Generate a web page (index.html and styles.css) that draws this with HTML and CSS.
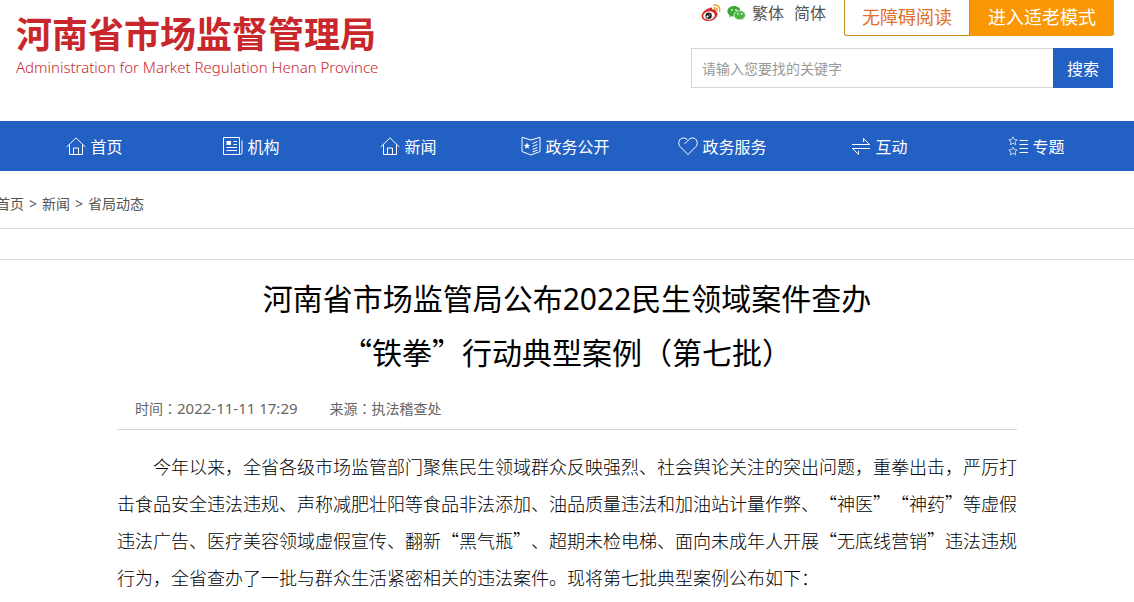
FILE: index.html
```html
<!DOCTYPE html>
<html lang="zh-CN">

<head>
    <meta charset="UTF-8">
    <meta name="viewport" content="width=device-width, initial-scale=1">
    <title>河南省市场监督管理局</title>
    <link rel="stylesheet" href="styles.css">
</head>

<body>
    <header class="header">
        <div class="logo">
            <div class="logo-cn">河南省市场监督管理局</div>
            <div class="logo-en">Administration for Market Regulation Henan Province</div>
        </div>
        <div class="tools">
            <div class="top-links">
                <a href="#" class="social" aria-label="微博">
                    <svg width="20" height="18" viewBox="0 0 20 18">
                        <path d="M8 4.2C9.6 3.2 11.4 3.4 11.2 5.6C13.6 4.6 15.4 5.3 14.8 7.6C17 8.5 17 10.8 15.7 12.7C14 15.4 10.8 17 7.6 17C3.6 17 .6 15 .6 12C.6 9.2 3.8 5.6 8 4.2Z" fill="#d52b2a" />
                        <ellipse cx="8" cy="11.6" rx="5.8" ry="4.2" fill="#fff" transform="rotate(-8 8 11.6)" />
                        <circle cx="7.6" cy="11.8" r="3.2" fill="#222" />
                        <circle cx="6.5" cy="12.6" r="1.1" fill="#fff" />
                        <circle cx="8.5" cy="11" r=".6" fill="#fff" />
                        <path d="M13 1.2C16.8.4 19.6 3.6 18.4 7.2M13.3 4C15.2 3.6 16.5 5 16 6.8" fill="none" stroke="#f0a02c" stroke-width="1.5" stroke-linecap="round" />
                    </svg>
                </a>
                <a href="#" class="social" aria-label="微信">
                    <svg width="19" height="16" viewBox="0 0 19 16">
                        <path d="M7 1C3.2 1 .4 3.3.4 6.3C.4 8 1.3 9.4 2.7 10.4L2.1 12.3L4.4 11.2C5.2 11.5 6 11.6 7 11.6C10.8 11.6 13.6 9.3 13.6 6.3S10.8 1 7 1Z" fill="#3fa535" />
                        <path d="M12.6 5.6C9.3 5.6 6.9 7.6 6.9 10.2C6.9 12.9 9.3 14.8 12.6 14.8C13.3 14.8 14 14.7 14.7 14.4L16.6 15.5L16.1 13.7C17.5 12.9 18.4 11.6 18.4 10.2C18.4 7.6 15.9 5.6 12.6 5.6Z" fill="#4eb244" stroke="#fff" stroke-width=".7" />
                        <circle cx="4.8" cy="4.8" r=".9" fill="#fff" />
                        <circle cx="9" cy="4.8" r=".9" fill="#fff" />
                        <circle cx="10.9" cy="8.9" r=".8" fill="#fff" />
                        <circle cx="14.5" cy="8.9" r=".8" fill="#fff" />
                    </svg>
                </a>
                <a href="#" class="lang">繁体</a>
                <a href="#" class="lang">简体</a>
                <a href="#" class="mode mode-read">无障碍阅读</a>
                <a href="#" class="mode mode-old">进入适老模式</a>
            </div>
            <form class="search">
                <input type="text" class="search-input" placeholder="请输入您要找的关键字" aria-label="请输入您要找的关键字">
                <button type="submit" class="search-btn">搜索</button>
            </form>
        </div>
    </header>

    <nav class="nav">
        <a href="#">
            <svg class="icon" viewBox="0 0 20 20"><path d="M.7 11L10 1.8L19.3 11M3.5 8.5V18.5H16.5V8.5M7.5 18.5V12H12.5V18.5" /></svg>
            首页
        </a>
        <a href="#">
            <svg class="icon" viewBox="0 0 20 20"><path d="M.5 1.5H16.5V18.5H.5ZM19 4.500V16.500Q19 18.500 17 18.500H16.500M10.500 5.500H14M10.500 8.500H14M3.500 11.500H14M3.500 14.500H14" /><path class="solid" d="M3.500 5H8V9H3.500Z" /></svg>
            机构
        </a>
        <a href="#">
            <svg class="icon" viewBox="0 0 20 20"><path d="M.7 11L10 1.8L19.3 11M3.5 8.5V18.5H16.5V8.5M7.5 18.5V12H12.5V18.5" /></svg>
            新闻
        </a>
        <a href="#">
            <svg class="icon" viewBox="0 0 20 20"><path d="M1 1.300L10 4L19 1.300V15.500L10 19L1 15.500ZM11.500 7.500L16.500 5.500M11.500 10.500L16.500 8.500M11.500 13.500L16.500 11.500M11.500 16L16.500 14" /><path class="solid" d="M6 6.500L6.900 8.800L9.200 8.900L7.400 10.400L8 12.800L6 11.500L4 12.800L4.600 10.400L2.800 8.900L5.100 8.800Z" /></svg>
            政务公开
        </a>
        <a href="#">
            <svg class="icon" viewBox="0 0 20 20"><path d="M10 18.500L2 10.500C-.5 7.500 1 2 5.300 2C7.500 2 9 3.200 10 4.500C11 3.200 12.500 2 14.700 2C19 2 20.500 7.500 18 10.500ZM10 4.500L6.500 8" /></svg>
            政务服务
        </a>
        <a href="#">
            <svg class="icon" viewBox="0 0 20 20"><path d="M1 8.500H18.500L12.500 2.500V6M19 12.500H1.500L7.500 18.500V15" /></svg>
            互动
        </a>
        <a href="#">
            <svg class="icon" viewBox="0 0 20 20"><path d="M11.500 4.500H20M11.500 8.500H20M11.500 12.500H20M11.500 16.500H20" /><path class="thin" d="M5 .8L6.300 3.500L9.200 3.800L7 5.800L7.700 8.700L5 7.200L2.300 8.700L3 5.800L.8 3.800L3.700 3.500ZM5 11L6.300 13.700L9.200 14L7 16L7.700 18.900L5 17.400L2.300 18.900L3 16L.8 14L3.700 13.700Z" /></svg>
            专题
        </a>
    </nav>

    <div class="crumbs">
        <a href="#">首页</a><span>&gt;</span><a href="#">新闻</a><span>&gt;</span><a href="#">省局动态</a>
    </div>
    <div class="strip"></div>

    <main class="article">
        <h1>河南省市场监管局公布<span class="num">2022</span>民生领域案件查办<br>“铁拳”行动典型案例（第七批）</h1>
        <div class="meta">
            <span>时间<span lang="zh-TW" class="colon">：</span><span class="num time">2022-11-11 17:29</span></span>
            <span>来源<span lang="zh-TW" class="colon">：</span>执法稽查处</span>
        </div>
        <p class="text">今年以来，全省各级市场监管部门聚焦民生领域群众反映强烈、社会舆论关注的突出问题，重拳出击，严厉打击食品安全违法违规、声称减肥壮阳等食品非法添加、油品质量违法和加油站计量作弊、“神医”“神药”等虚假违法广告、医疗美容领域虚假宣传、翻新“黑气瓶”、超期未检电梯、面向未成年人开展“无底线营销”违法违规行为，全省查办了一批与群众生活紧密相关的违法案件。现将第七批典型案例公布如下：</p>
    </main>
</body>

</html>
```
FILE: styles.css
```css
* {
    box-sizing: border-box;
}

body {
    margin: 0;
    background: #fff;
    color: #000;
    font-family: "Noto Sans CJK SC", sans-serif;
    text-spacing-trim: space-all;
    overflow-x: hidden;
}

a {
    color: inherit;
    text-decoration: none;
}

.num {
    font-family: "Noto Sans", sans-serif;
    line-height: 1;
}

.colon {
    font-family: "Noto Sans CJK TC", sans-serif;
}

/* 页头 */
.header {
    display: flex;
    justify-content: space-between;
    height: 121px;
    padding: 0 21px 0 16px;
}

.logo {
    padding-top: 10px;
    color: #c8282c;
    white-space: nowrap;
}

.logo-cn {
    font-size: 36px;
    font-weight: 700;
    line-height: 44px;
}

.logo-en {
    font-family: "Noto Sans", sans-serif;
    font-size: 15px;
    font-weight: 300;
    line-height: 26px;
}

.tools {
    width: 422px;
}

.top-links {
    display: flex;
    align-items: flex-start;
    height: 36px;
    margin-right: -1px;
    padding-left: 10px;
    color: #555;
    font-size: 16px;
    line-height: 24px;
}

.social {
    display: flex;
    align-items: center;
    height: 26px;
    margin-right: 6px;
}

.lang {
    margin-right: 10px;
}

.mode {
    height: 36px;
    padding: 0 17px;
    border: 1px solid #c98a1c;
    border-top: 0;
    font-size: 18px;
    line-height: 32px;
    white-space: nowrap;
}

.mode-read {
    margin-left: auto;
    color: #e0702c;
    border-radius: 0 0 0 3px;
}

.mode-old {
    background: #f99704;
    border-color: #f99704;
    color: #fff;
    border-radius: 0 0 3px 0;
}

.search {
    display: flex;
    height: 40px;
    margin-top: 12px;
}

.search-input {
    flex: 1;
    min-width: 0;
    padding: 0 10px;
    border: 1px solid #d5d5d5;
    border-right: 0;
    font-family: inherit;
    font-size: 14px;
}

.search-input::placeholder {
    color: #999;
}

.search-btn {
    width: 60px;
    padding: 0;
    border: 0;
    background: #2261c3;
    color: #fff;
    font-family: inherit;
    font-size: 16px;
}

/* 导航 */
.nav {
    display: grid;
    grid-template-columns: repeat(7, 1fr);
    height: 50px;
    padding: 0 19px 0 16px;
    background: #2261c3;
    color: #fff;
    font-size: 16px;
}

.nav a {
    display: flex;
    align-items: center;
    justify-content: center;
    gap: 4px;
    white-space: nowrap;
}

.icon {
    width: 20px;
    height: 20px;
    fill: none;
    stroke: #fff;
    stroke-width: 1;
}

.icon .solid {
    fill: #fff;
    stroke: none;
}

.icon .thin {
    stroke-width: .7;
}

/* 当前位置 */
.crumbs {
    display: flex;
    align-items: baseline;
    gap: 5px;
    height: 58px;
    margin-left: -4px;
    padding-top: 8px;
    border-bottom: 1px solid #ddd;
    color: #555;
    font-size: 14px;
    line-height: 48px;
}

.crumbs span {
    font-family: "Noto Sans", sans-serif;
}

.strip {
    height: 31px;
    border-bottom: 1px solid #ddd;
}

/* 正文 */
.article {
    max-width: 900px;
    margin: 0 auto;
    padding-top: 10px;
}

h1 {
    margin: 0;
    font-size: 30px;
    font-weight: 400;
    line-height: 54px;
    text-align: center;
}

.meta {
    display: flex;
    gap: 32px;
    height: 52px;
    padding: 10px 18px 0;
    border-bottom: 1px solid #d5d5d5;
    color: #666;
    font-size: 14px;
    line-height: 40px;
}

.time {
    font-size: 15px;
}

.text {
    margin: 18px 0 0;
    font-size: 18px;
    font-weight: 300;
    line-height: 37px;
    text-indent: 2em;
}
```
